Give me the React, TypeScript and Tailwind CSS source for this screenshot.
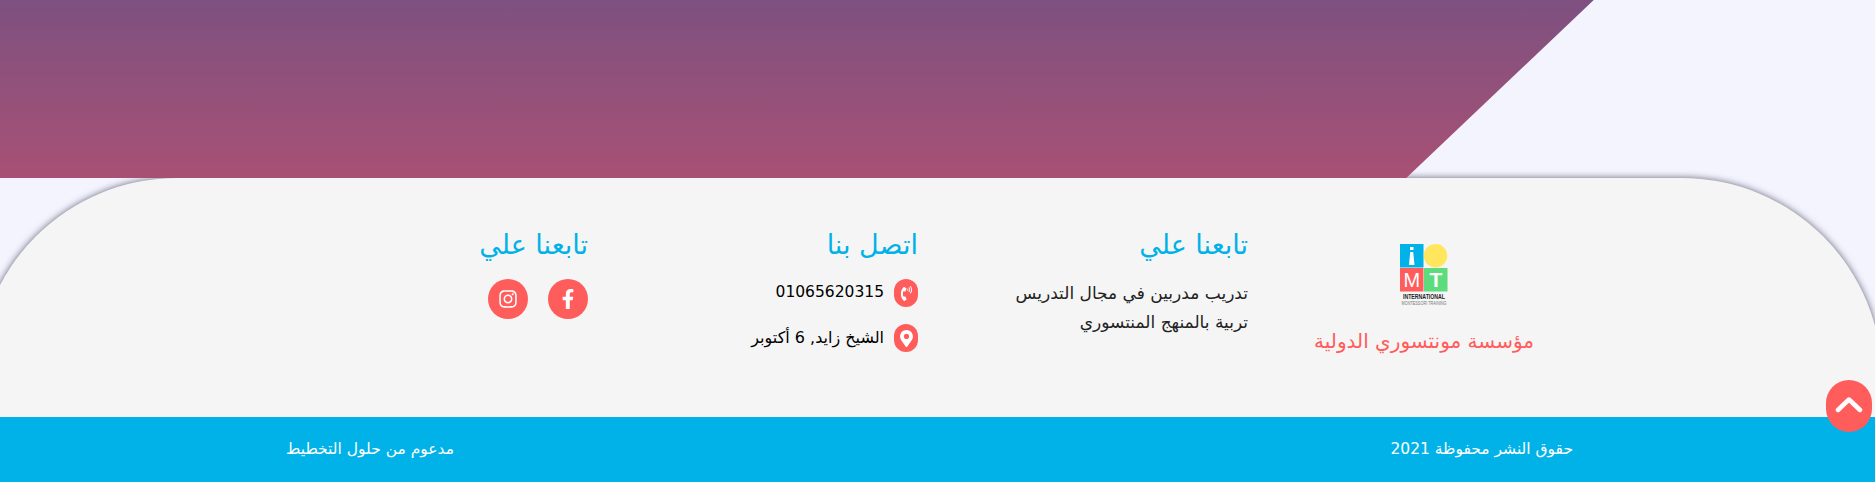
import { FaFacebookF, FaInstagram, FaMapMarkerAlt, FaPhoneVolume } from "react-icons/fa";

function Logo() {
  return (
    <svg width="50" height="62" viewBox="0 0 50 62" dir="ltr" className="block">
      <rect x="1" y="0" width="23.5" height="23.5" fill="#00b2e8" />
      <circle cx="36.5" cy="11.75" r="11.75" fill="#ffe65c" />
      <rect x="1" y="24" width="23.5" height="23.5" fill="#ff5c5c" />
      <rect x="25" y="24" width="23.5" height="23.5" fill="#5cdc7c" />
      <rect x="11" y="3" width="3.5" height="3" fill="#fff" />
      <path d="M11.2 8h3l1.3 13h-5.5z" fill="#fff" />
      <text x="12.8" y="43" textAnchor="middle" fill="#fff" fontFamily="Liberation Sans, sans-serif" fontSize="20">M</text>
      <text x="36.8" y="43" textAnchor="middle" fill="#fff" fontFamily="Liberation Sans, sans-serif" fontWeight="700" fontSize="21">T</text>
      <g transform="scale(0.8 1)">
        <text x="31.25" y="55.5" textAnchor="middle" fill="#222" fontFamily="Liberation Sans, sans-serif" fontWeight="700" fontSize="6.5">INTERNATIONAL</text>
        <text x="31.25" y="61.5" textAnchor="middle" fill="#777" fontFamily="Liberation Sans, sans-serif" fontSize="4.8">MONTESSORI TRAINING</text>
      </g>
    </svg>
  );
}

function Heading({ children }: { children: React.ReactNode }) {
  return <h3 className="text-[27px] leading-[40px] font-normal text-[#00b2e8]">{children}</h3>;
}

export default function App() {
  return (
    <div dir="rtl" className="relative h-[482px] w-[1875px] overflow-hidden bg-[#f4f4ff] font-['DejaVu_Sans',sans-serif]">
      <div dir="ltr" className="relative z-10 h-[178px] w-full bg-gradient-to-b from-[#7d5080] to-[#a85074] [clip-path:polygon(0_0,85%_0,75%_100%,0_100%)]" />
      <footer className="-mr-[7px] -ml-[23px] h-[239px] rounded-t-[200px] bg-[#f5f5f5] shadow-[0_0_7px_rgba(50,50,70,0.75)]">
        <div className="flex pt-[47px] pr-[302px]">
          <div className="flex w-[332px] flex-col items-center pt-[19px] pl-[20px]">
            <Logo />
            <p className="mt-[20px] text-[20px] leading-[30px] text-[#ff5c5c]">مؤسسة مونتسوري الدولية</p>
          </div>
          <div className="w-[330px]">
            <Heading>تابعنا علي</Heading>
            <p className="mt-[14px] text-[17px] leading-[29px] text-[#222]">
              تدريب مدربين في مجال التدريس
              <br />
              تربية بالمنهج المنتسوري
            </p>
          </div>
          <div className="w-[330px]">
            <Heading>اتصل بنا</Heading>
            <div className="mt-[14px] flex flex-col gap-[17px]">
              <div className="flex items-center gap-[10px]">
                <span className="flex h-[28px] w-[24px] items-center justify-center rounded-full bg-[#ff5c5c] text-white">
                  <FaPhoneVolume size={15} />
                </span>
                <span className="text-[15.5px] text-black">01065620315</span>
              </div>
              <div className="flex items-center gap-[10px]">
                <span className="flex h-[28px] w-[24px] items-center justify-center rounded-full bg-[#ff5c5c] text-white">
                  <FaMapMarkerAlt size={17} />
                </span>
                <span className="text-[16px] text-black">الشيخ زايد, 6 أكتوبر</span>
              </div>
            </div>
          </div>
          <div>
            <Heading>تابعنا علي</Heading>
            <div className="mt-[14px] flex gap-[20px]">
              <span className="flex h-[40px] w-[40px] items-center justify-center rounded-full bg-[#ff5c5c] text-white">
                <FaFacebookF size={20} />
              </span>
              <span className="flex h-[40px] w-[40px] items-center justify-center rounded-full bg-[#ff5c5c] text-white">
                <FaInstagram size={20} />
              </span>
            </div>
          </div>
        </div>
      </footer>
      <div className="flex h-[65px] items-center justify-between bg-[#00b2e8] pr-[302px] pl-[286px] text-[15.5px] text-white">
        <span>حقوق النشر محفوظة 2021</span>
        <span>مدعوم من حلول التخطيط</span>
      </div>
      <button className="absolute top-[380px] left-[1826px] z-20 flex h-[52px] w-[46px] items-center justify-center rounded-full bg-[#ff5c5c] text-white">
        <svg width="28" height="18" viewBox="0 0 28 18" className="-mt-[4px]">
          <polyline points="3,15 14,4.5 25,15" fill="none" stroke="#fff" strokeWidth="4.5" strokeLinecap="round" strokeLinejoin="round" />
        </svg>
      </button>
    </div>
  );
}
